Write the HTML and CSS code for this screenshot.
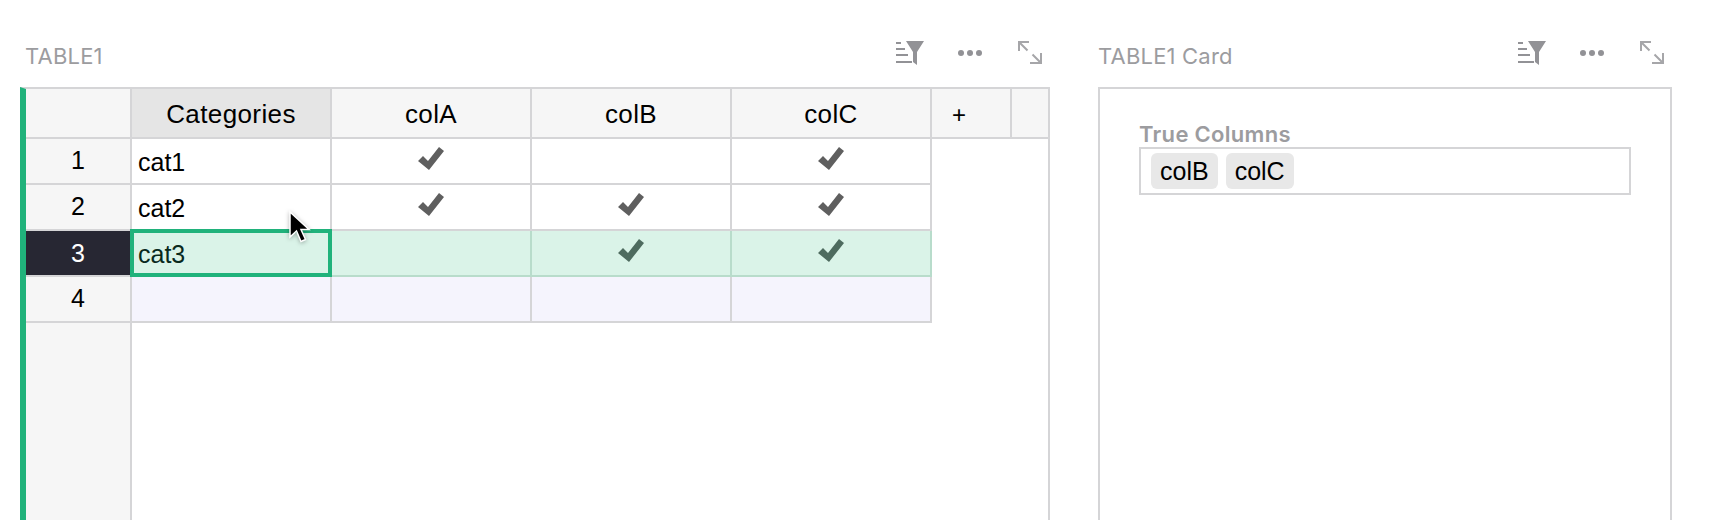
FILE: index.html
```html
<!DOCTYPE html>
<html lang="en">
<head>
    <meta charset="UTF-8">
    <title>TABLE1</title>
    <link rel="stylesheet" href="styles.css">
</head>
<body>
    <svg class="defs" width="0" height="0">
        <symbol id="icon-filter" viewBox="0 0 28 24">
            <path d="M0 1h5v2H0zM0 7h9v2H0zM0 13h12v2H0zM0 20h16v2H0z"/>
            <path d="M10 0h18l-7 11v13l-4-3V11z"/>
        </symbol>
        <symbol id="icon-dots" viewBox="0 0 24 6">
            <circle cx="3" cy="3" r="3"/>
            <circle cx="12" cy="3" r="3"/>
            <circle cx="21" cy="3" r="3"/>
        </symbol>
        <symbol id="icon-expand" viewBox="0 0 24 23">
            <path d="M1 10V1h10M1 1l8.500 8.500M23 12v10H12M23 22l-8.500-8.500" fill="none" stroke="currentColor" stroke-width="2"/>
        </symbol>
        <symbol id="icon-check" viewBox="0 0 26 23">
            <path d="M0 14l5-5 5 5L21 0l5 4-15 19z"/>
        </symbol>
    </svg>

    <div class="page">
        <section class="panel panel-table">
            <div class="panel-head">
                <span class="panel-title">TABLE1</span>
                <div class="panel-icons">
                    <svg class="icon-filter"><use href="#icon-filter"/></svg>
                    <svg class="icon-dots"><use href="#icon-dots"/></svg>
                    <svg class="icon-expand"><use href="#icon-expand"/></svg>
                </div>
            </div>
            <div class="grid">
                <div class="row-nums">
                    <div class="corner"></div>
                    <div class="num">1</div>
                    <div class="num">2</div>
                    <div class="num active">3</div>
                    <div class="num">4</div>
                </div>
                <div class="cells">
                    <div class="row head">
                        <div class="cell col current">Categories</div>
                        <div class="cell col">colA</div>
                        <div class="cell col">colB</div>
                        <div class="cell col">colC</div>
                        <div class="cell add">+</div>
                        <div class="cell rest"></div>
                    </div>
                    <div class="row">
                        <div class="cell text">cat1</div>
                        <div class="cell"><svg class="check"><use href="#icon-check"/></svg></div>
                        <div class="cell"></div>
                        <div class="cell"><svg class="check"><use href="#icon-check"/></svg></div>
                    </div>
                    <div class="row">
                        <div class="cell text">cat2</div>
                        <div class="cell"><svg class="check"><use href="#icon-check"/></svg></div>
                        <div class="cell"><svg class="check"><use href="#icon-check"/></svg></div>
                        <div class="cell"><svg class="check"><use href="#icon-check"/></svg></div>
                    </div>
                    <div class="row active">
                        <div class="cell text selected">cat3</div>
                        <div class="cell"></div>
                        <div class="cell"><svg class="check"><use href="#icon-check"/></svg></div>
                        <div class="cell"><svg class="check"><use href="#icon-check"/></svg></div>
                    </div>
                    <div class="row new">
                        <div class="cell"></div>
                        <div class="cell"></div>
                        <div class="cell"></div>
                        <div class="cell"></div>
                    </div>
                </div>
            </div>
            <svg class="cursor" viewBox="0 0 24 34">
                <path d="M2 2v25l6.500-6 4.500 10.500 4.500-2-4.500-10H21z"/>
            </svg>
        </section>

        <section class="panel panel-card">
            <div class="panel-head">
                <span class="panel-title">TABLE1 Card</span>
                <div class="panel-icons">
                    <svg class="icon-filter"><use href="#icon-filter"/></svg>
                    <svg class="icon-dots"><use href="#icon-dots"/></svg>
                    <svg class="icon-expand"><use href="#icon-expand"/></svg>
                </div>
            </div>
            <div class="card">
                <div class="field-label">True Columns</div>
                <div class="field-box">
                    <span class="chip">colB</span>
                    <span class="chip">colC</span>
                </div>
            </div>
        </section>
    </div>
</body>
</html>
```

FILE: styles.css
```css
html, body {
    margin: 0;
    height: 520px;
    overflow: hidden;
    background-color: #fff;
}
.defs {
    position: absolute;
}
.page {
    display: flex;
    gap: 48px;
    height: 520px;
    padding-left: 20px;
    font-family: "Liberation Sans", Arial, sans-serif;
    color: #000;
}
.panel {
    position: relative;
    display: flex;
    flex-direction: column;
}
.panel-table {
    width: 1030px;
}
.panel-card {
    width: 574px;
}
.panel-head {
    flex: none;
    display: flex;
    justify-content: space-between;
    height: 87px;
    box-sizing: border-box;
    padding-top: 41px;
}
.panel-table .panel-title {
    padding-left: 5px;
}
.panel-title {
    font-family: Inter, sans-serif;
    font-size: 22px;
    line-height: 31px;
    letter-spacing: 0.2px;
    color: #9c9c9f;
}
.panel-icons {
    display: flex;
    align-items: flex-start;
    margin-right: 8px;
    color: #929296;
    fill: #929296;
}
.icon-filter {
    width: 28px;
    height: 24px;
    margin-right: 34px;
}
.icon-dots {
    width: 24px;
    height: 6px;
    margin-top: 9px;
    margin-right: 36px;
}
.icon-expand {
    width: 24px;
    height: 23px;
    color: #a6a6a9;
    fill: none;
}

/* table */
.grid {
    flex: 1;
    display: flex;
    border-top: 2px solid #d5d5d7;
    border-right: 2px solid #d5d5d7;
    border-left: 6px solid #20b27b;
}
.row-nums {
    flex: none;
    width: 104px;
    border-right: 2px solid #d5d5d7;
    background-color: #f6f6f6;
}
.corner {
    height: 48px;
    border-bottom: 2px solid #d5d5d7;
}
.num {
    height: 44px;
    border-bottom: 2px solid #d5d5d7;
    font-size: 25px;
    line-height: 42px;
    text-align: center;
}
.num.active {
    background-color: #272733;
    color: #fff;
    line-height: 44px;
}
.cells {
    flex: 1;
    min-width: 0;
}
.row {
    display: flex;
}
.cell {
    position: relative;
    display: flex;
    justify-content: center;
    box-sizing: border-box;
    width: 200px;
    height: 46px;
    border-right: 2px solid #d5d5d7;
    border-bottom: 2px solid #d5d5d7;
}
.head .cell {
    height: 50px;
    background-color: #f6f6f6;
    font-size: 26px;
    letter-spacing: 0.4px;
    line-height: 50px;
}
.head .current {
    background-color: #e5e5e5;
}
.head .add {
    justify-content: flex-start;
    width: 80px;
    padding-left: 20px;
    font-size: 24px;
    line-height: 52px;
}
.head .rest {
    flex: 1;
    width: auto;
    border-right: none;
}
.cell.text {
    justify-content: flex-start;
    padding-left: 6px;
    font-size: 25px;
    line-height: 47px;
}
.check {
    width: 26px;
    height: 23px;
    margin-top: 8px;
    fill: #5f5f5f;
}
.row.active .cell {
    background-color: #daf3e8;
    border-right-color: #b8dccb;
    border-bottom-color: #b8dccb;
    color: #08291d;
}
.row.active .check {
    fill: #4e6b5f;
}
.row.new .cell {
    background-color: #f5f4fd;
}
.cell.selected::after {
    content: "";
    position: absolute;
    top: -2px;
    right: -2px;
    bottom: -2px;
    left: -2px;
    border: 4px solid #20b27b;
}
.cursor {
    position: absolute;
    left: 268px;
    top: 210px;
    width: 24px;
    height: 34px;
    fill: #000;
    stroke: #fff;
    stroke-width: 1.5;
    filter: drop-shadow(0 1px 2px rgba(0, 0, 0, 0.3));
}

/* card */
.card {
    flex: 1;
    box-sizing: border-box;
    padding: 33px 39px 0 39px;
    border: 2px solid #d5d5d7;
    border-bottom: none;
}
.field-label {
    font-family: Inter, sans-serif;
    font-size: 22px;
    font-weight: 600;
    line-height: 25px;
    letter-spacing: 0.3px;
    color: #9c9c9f;
}
.field-box {
    display: flex;
    gap: 8px;
    height: 48px;
    box-sizing: border-box;
    padding: 4px 10px;
    border: 2px solid #d5d5d7;
}
.chip {
    padding: 0 9px;
    border-radius: 6px;
    background-color: #e8e8e8;
    font-size: 25px;
    line-height: 36px;
}
```
